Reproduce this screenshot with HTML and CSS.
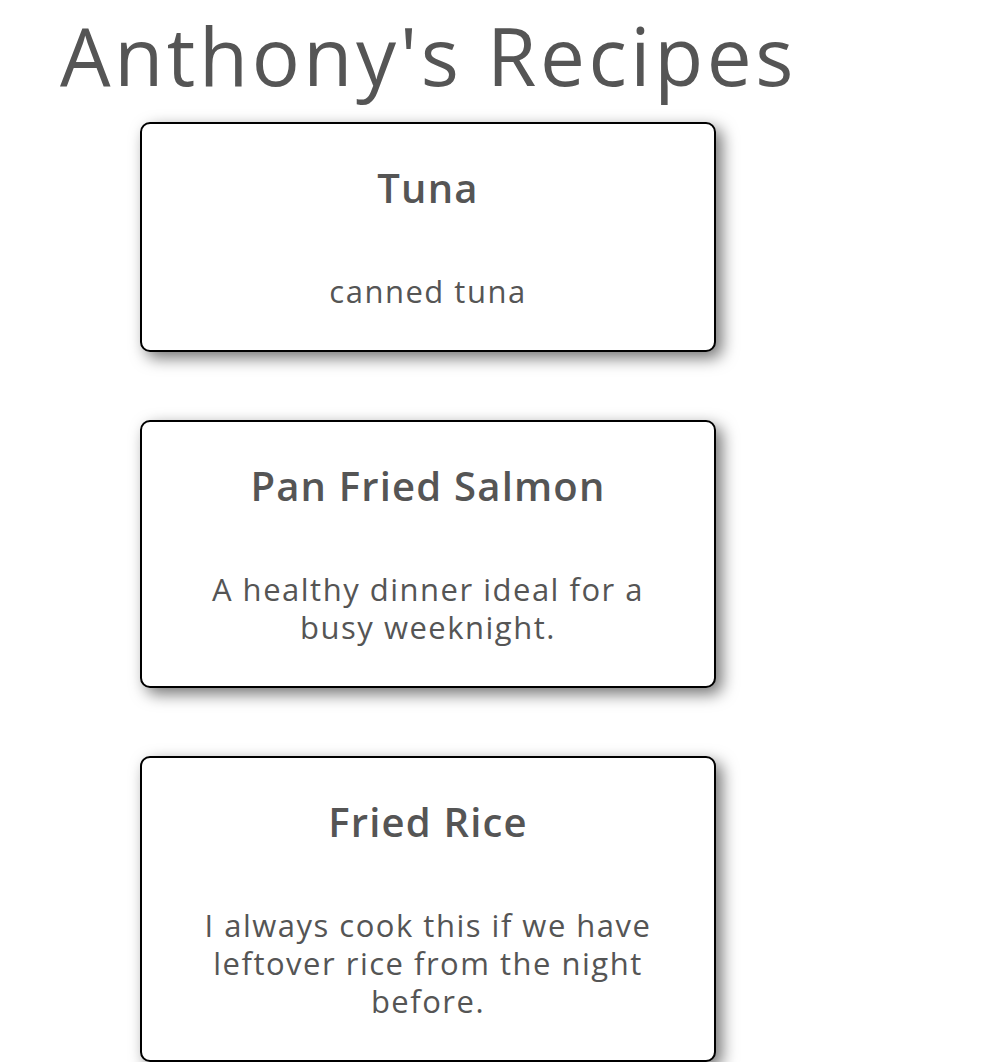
FILE: index.html
```html
<!DOCTYPE html>
<html lang="en">
<head>
<meta charset="utf-8">
<title>Anthony's Recipes</title>
<link rel="stylesheet" href="styles.css">
</head>
<body>
<h1 class="site-title">Anthony's Recipes</h1>
<main class="recipe-list">
  <article class="recipe-card">
    <h2 class="recipe-name">Tuna</h2>
    <p class="recipe-desc">canned tuna</p>
  </article>
  <article class="recipe-card">
    <h2 class="recipe-name">Pan Fried Salmon</h2>
    <p class="recipe-desc">A healthy dinner ideal for a busy weeknight.</p>
  </article>
  <article class="recipe-card">
    <h2 class="recipe-name">Fried Rice</h2>
    <p class="recipe-desc">I always cook this if we have leftover rice from the night before.</p>
  </article>
</main>
</body>
</html>
```
FILE: styles.css
```css
* { box-sizing: border-box; }
html, body { margin: 0; padding: 0; background: #fff; }
body {
  font-family: "Open Sans", "Liberation Sans", sans-serif;
  color: #555555;
}
.site-title {
  margin: 15px 0 27px 0;
  padding-left: 60px;
  font-size: 80px;
  line-height: 80px;
  font-weight: 400;
  letter-spacing: 3.6px;
}
.recipe-list {
  display: flex;
  flex-direction: column;
  gap: 68px;
  padding-left: 140px;
}
.recipe-card {
  width: 576px;
  border: 2px solid #000;
  border-radius: 10px;
  background: #fff;
  box-shadow: 6px 6px 16px rgba(0, 0, 0, 0.55);
  text-align: center;
  padding: 40px 55px 40px;
}
.recipe-name {
  margin: 0 0 60px 0;
  font-size: 40px;
  line-height: 48px;
  font-weight: 600;
  letter-spacing: 1.2px;
}
.recipe-desc {
  margin: 0;
  font-size: 31px;
  line-height: 38px;
  font-weight: 400;
  letter-spacing: 1.5px;
}
```
